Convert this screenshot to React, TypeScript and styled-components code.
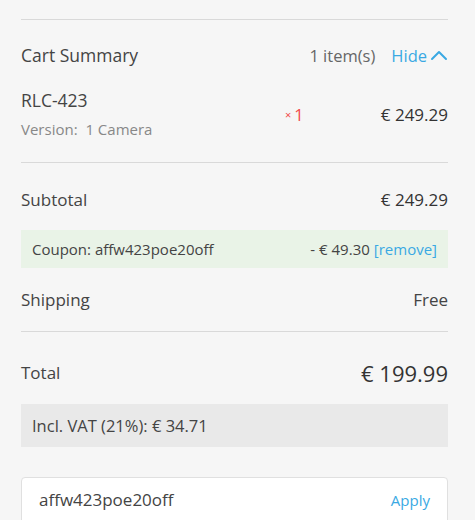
import React from "react";
import styled, { createGlobalStyle } from "styled-components";

const Global = createGlobalStyle`
  html, body { margin: 0; padding: 0; background: #f6f6f6; }
  body { font-family: "Open Sans", "Liberation Sans", sans-serif; color: #333; }
`;

const Panel = styled.div`
  width: 475px;
  height: 520px;
  overflow: hidden;
  box-sizing: border-box;
  padding: 19px 27px 0 21px;
  background: #f6f6f6;
`;

const Divider = styled.div`
  height: 1px;
  background: #d9d9d9;
`;

const Header = styled.div`
  height: 70px;
  display: flex;
  align-items: center;
  justify-content: space-between;
`;

const Title = styled.div`
  font-size: 17.5px;
  color: #444;
`;

const HeaderRight = styled.div`
  display: flex;
  align-items: center;
  gap: 16px;
`;

const Count = styled.span`
  font-size: 16.5px;
  color: #666;
`;

const Toggle = styled.span`
  display: flex;
  align-items: center;
  gap: 3px;
  font-size: 16.5px;
  color: #3aa9e3;
`;

const ItemRow = styled.div`
  display: flex;
  align-items: center;
  padding-bottom: 24px;
`;

const ItemInfo = styled.div`
  flex: 1;
  display: flex;
  flex-direction: column;
  gap: 10px;
`;

const ItemName = styled.div`
  font-size: 17.5px;
  line-height: 20px;
  color: #444;
`;

const ItemVersion = styled.div`
  font-size: 15px;
  line-height: 18px;
  color: #888;
  white-space: pre;
`;

const Qty = styled.div`
  color: #f24b4b;
  font-size: 16.5px;
  display: flex;
  align-items: center;
  gap: 3px;
  margin-right: 77px;
`;

const Times = styled.span`
  font-size: 11px;
`;

const Price = styled.div<{ $size?: number }>`
  font-size: ${(p) => p.$size ?? 17}px;
  color: #333;
`;

const Row = styled.div<{ $top: number; $bottom: number; $lh?: number }>`
  display: flex;
  align-items: center;
  justify-content: space-between;
  line-height: ${(p) => p.$lh ?? 22}px;
  padding-top: ${(p) => p.$top}px;
  padding-bottom: ${(p) => p.$bottom}px;
`;

const Label = styled.div`
  font-size: 17px;
  color: #444;
`;

const Coupon = styled.div`
  height: 38px;
  background: #e9f3e7;
  display: flex;
  align-items: center;
  justify-content: space-between;
  padding: 0 11px;
  font-size: 15px;
  color: #444;
`;

const Remove = styled.span`
  color: #3aa9e3;
  margin-left: 4px;
`;

const Vat = styled.div`
  height: 43px;
  background: #e9e9e9;
  display: flex;
  align-items: center;
  padding: 0 11px;
  font-size: 16.5px;
  color: #444;
`;

const CouponInput = styled.div`
  margin-top: 30px;
  height: 50px;
  background: #fff;
  border: 1px solid #e0e0e0;
  border-radius: 4px;
  box-sizing: border-box;
  display: flex;
  align-items: flex-start;
  justify-content: space-between;
  padding: 10px 17px 0 17px;
  font-size: 17px;
`;

const InputText = styled.span`
  color: #444;
`;

const Apply = styled.span`
  color: #3aa9e3;
  font-size: 15px;
  margin-top: 2px;
`;

export default function App() {
  return (
    <>
      <Global />
      <Panel>
        <Divider />
        <Header>
          <Title>Cart Summary</Title>
          <HeaderRight>
            <Count>1 item(s)</Count>
            <Toggle>
              Hide
              <svg width="18" height="12" viewBox="0 0 18 12" fill="none">
                <path d="M2 10 L9 3 L16 10" stroke="#3aa9e3" strokeWidth="2" strokeLinecap="round" strokeLinejoin="round" />
              </svg>
            </Toggle>
          </HeaderRight>
        </Header>
        <ItemRow>
          <ItemInfo>
            <ItemName>RLC-423</ItemName>
            <ItemVersion>Version:  1 Camera</ItemVersion>
          </ItemInfo>
          <Qty>
            <Times>×</Times>1
          </Qty>
          <Price>€ 249.29</Price>
        </ItemRow>
        <Divider />
        <Row $top={26} $bottom={19}>
          <Label>Subtotal</Label>
          <Price>€ 249.29</Price>
        </Row>
        <Coupon>
          <span>Coupon: affw423poe20off</span>
          <span>
            - € 49.30<Remove>[remove]</Remove>
          </span>
        </Coupon>
        <Row $top={21} $bottom={20}>
          <Label>Shipping</Label>
          <Label>Free</Label>
        </Row>
        <Divider />
        <Row $top={28} $bottom={18} $lh={26}>
          <Label>Total</Label>
          <Price $size={22}>€ 199.99</Price>
        </Row>
        <Vat>Incl. VAT (21%): € 34.71</Vat>
        <CouponInput>
          <InputText>affw423poe20off</InputText>
          <Apply>Apply</Apply>
        </CouponInput>
      </Panel>
    </>
  );
}
